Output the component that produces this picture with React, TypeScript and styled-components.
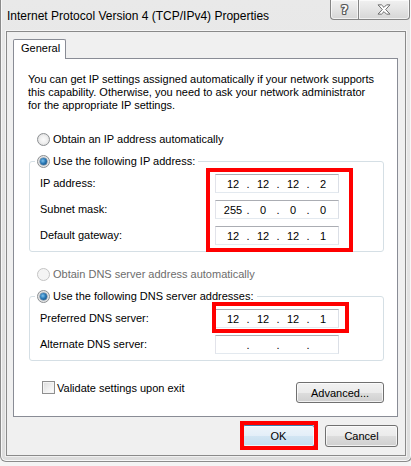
import React from "react";
import styled, { createGlobalStyle } from "styled-components";

const GlobalStyle = createGlobalStyle`
  html, body { margin: 0; padding: 0; }
  body {
    background: #f4f4f4;
    font-family: "Liberation Sans", Arial, sans-serif;
    font-size: 11px;
    color: #000;
    overflow: hidden;
  }
  #root { width: 411px; height: 466px; overflow: hidden; }
`;

const Window = styled.div`
  width: 412px;
  height: 462px;
  box-sizing: border-box;
  border: 1px solid #8b8b8b;
  border-top: none;
  border-radius: 0 0 6px 6px;
  background: linear-gradient(to bottom, #e9e9e9 0%, #e3e3e3 55%, #dddddd 100%);
  box-shadow: inset 1px 0 0 #f7f7f7, inset -1px 0 0 #f7f7f7, inset 0 -1px 0 #f7f7f7;
  display: flex;
  flex-direction: column;
`;

const TitleBar = styled.div`
  height: 31px;
  display: flex;
  align-items: center;
  padding-left: 6px;
`;

const Title = styled.div`
  flex: 1;
  font-size: 12px;
  color: #000;
  white-space: nowrap;
  padding-top: 1px;
`;

const CaptionGroup = styled.div`
  display: flex;
  align-self: flex-start;
  margin-right: 1px;
`;

const CaptionButton = styled.div<{ $width: number; $side: "left" | "right" }>`
  box-sizing: border-box;
  width: ${(p) => p.$width}px;
  height: 20px;
  border: 1px solid #858585;
  border-top: none;
  ${(p) => (p.$side === "left" ? "border-right: none;" : "")}
  border-radius: ${(p) => (p.$side === "left" ? "0 0 0 4px" : "0 0 4px 0")};
  background: linear-gradient(to bottom, #f1f1f1 0%, #e4e4e4 50%, #d6d6d6 100%);
  box-shadow: inset 0 0 0 1px rgba(255, 255, 255, 0.65);
  display: flex;
  align-items: center;
  justify-content: center;
`;

const HelpGlyph = styled.span`
  font-family: "DejaVu Sans", sans-serif;
  font-weight: bold;
  font-size: 12px;
  line-height: 12px;
  color: #fff;
  text-shadow: 1px 0 0 #555, -1px 0 0 #555, 0 1px 0 #555, 0 -1px 0 #555,
    1px 1px 0 #666, -1px -1px 0 #777, 1px -1px 0 #777, -1px 1px 0 #777;
  margin-top: 1px;
`;

const Client = styled.div`
  margin: 0 5px;
  border: 1px solid #8a8a8a;
  background: #f0f0f0;
  padding: 7px 7px 8px 6px;
  display: flex;
  flex-direction: column;
  box-shadow: 0 0 0 1px rgba(255, 255, 255, 0.55);
`;

const TabStrip = styled.div`
  display: flex;
  position: relative;
  z-index: 1;
  margin-bottom: -1px;
`;

const Tab = styled.div`
  box-sizing: border-box;
  width: 53px;
  height: 20px;
  border: 1px solid #898c95;
  border-bottom: none;
  border-radius: 2px 2px 0 0;
  background: #fff;
  padding-left: 7px;
  line-height: 17px;
`;

const Panel = styled.div`
  border: 1px solid #898c95;
  background: #fff;
  padding: 14px 13px 13px 14px;
  display: flex;
  flex-direction: column;
`;

const Intro = styled.p`
  margin: 0;
  line-height: 13px;
  white-space: nowrap;
`;

const RadioRow = styled.label<{ $top: number; $disabled?: boolean }>`
  display: flex;
  align-items: center;
  gap: 3px;
  height: 16px;
  margin: ${(p) => p.$top}px 0 0 9px;
  color: ${(p) => (p.$disabled ? "#6d6d6d" : "#000")};
  white-space: nowrap;
`;

const RadioCircle = styled.span<{ $checked?: boolean; $disabled?: boolean }>`
  box-sizing: border-box;
  flex: none;
  width: 13px;
  height: 13px;
  border-radius: 50%;
  border: 1px solid ${(p) => (p.$disabled ? "#c4c4c4" : "#8c8f92")};
  background: ${(p) =>
    p.$disabled
      ? "#f4f4f4"
      : "radial-gradient(circle at 50% 50%, #fbfbfb 0%, #f0f0f0 45%, #d4d4d4 100%)"};
  display: flex;
  align-items: center;
  justify-content: center;
  &::after {
    content: "";
    display: ${(p) => (p.$checked ? "block" : "none")};
    width: 7px;
    height: 7px;
    border-radius: 50%;
    background: radial-gradient(circle at 40% 40%, #7fc4ef 0%, #2a79b6 45%, #0d3f6e 100%);
    box-shadow: 0 0 0 0.5px #56718a;
  }
`;

const Group = styled.fieldset`
  margin: 6px 0 0 1px;
  padding: 5px 10px 6px 10px;
  border: 1px solid #d5dfe5;
  border-radius: 3px;
  min-width: 0;
`;

const GroupLegend = styled.legend`
  display: flex;
  align-items: center;
  gap: 3px;
  height: 16px;
  margin-left: -5px;
  padding: 0 3px 0 2px;
  white-space: nowrap;
`;

const GroupBody = styled.div`
  display: flex;
`;

const LabelColumn = styled.div`
  width: 175px;
  display: flex;
  flex-direction: column;
  gap: 7px;
`;

const FieldLabel = styled.div`
  height: 19px;
  line-height: 19px;
  white-space: nowrap;
`;

const FieldColumn = styled.div`
  position: relative;
  display: flex;
  flex-direction: column;
  gap: 7px;
`;

const FieldWrap = styled.div`
  position: relative;
`;

const IpBox = styled.div`
  box-sizing: border-box;
  width: 124px;
  height: 19px;
  border: 1px solid;
  border-color: #abadb3 #dbdfe6 #e3e9ef #e2e3ea;
  background: #fff;
  display: flex;
  align-items: center;
  padding-left: 5px;
`;

const Octet = styled.span`
  width: 24px;
  text-align: center;
`;

const Dot = styled.span`
  width: 6px;
  text-align: center;
`;

const Highlight = styled.span<{ $t: number; $r: number; $b: number; $l: number }>`
  position: absolute;
  top: ${(p) => p.$t}px;
  right: ${(p) => p.$r}px;
  bottom: ${(p) => p.$b}px;
  left: ${(p) => p.$l}px;
  border: 4px solid #ff0000;
  pointer-events: none;
  z-index: 2;
`;

const BottomRow = styled.div`
  display: flex;
  align-items: flex-start;
  justify-content: space-between;
  margin-top: 20px;
`;

const CheckRow = styled.label`
  display: flex;
  align-items: center;
  gap: 2px;
  height: 13px;
  margin-left: 14px;
  white-space: nowrap;
`;

const CheckBox = styled.span`
  box-sizing: border-box;
  width: 13px;
  height: 13px;
  border: 1px solid #8f8f8f;
  background: linear-gradient(135deg, #dcdcdc 0%, #f2f2f2 60%, #ffffff 100%);
  box-shadow: inset 0 0 0 1px #f4f4f4;
`;

const PushButton = styled.button<{ $width: number; $height: number; $default?: boolean }>`
  box-sizing: border-box;
  width: ${(p) => p.$width}px;
  height: ${(p) => p.$height}px;
  padding: 0;
  font-family: "Liberation Sans", Arial, sans-serif;
  font-size: 11px;
  color: #000;
  border: 1px solid ${(p) => (p.$default ? "#3c7fb1" : "#707070")};
  border-radius: 3px;
  background: ${(p) =>
    p.$default
      ? "linear-gradient(to bottom, #eef5fb 0%, #e3eef8 50%, #d2e5f3 51%, #c4dcee 100%)"
      : "linear-gradient(to bottom, #f2f2f2 0%, #ebebeb 50%, #dddddd 51%, #cfcfcf 100%)"};
  box-shadow: inset 0 0 0 1px rgba(255, 255, 255, 0.7);
`;

const AdvancedButton = styled(PushButton)`
  margin-top: 1px;
`;

const ButtonRow = styled.div`
  display: flex;
  justify-content: flex-end;
  gap: 10px;
  margin-top: 8px;
`;

const OkWrap = styled.div`
  position: relative;
  display: flex;
`;

function CloseIcon() {
  return (
    <svg width="14" height="11" viewBox="-1 -1 16 13" aria-hidden="true">
      <path
        d="M0 0 H4 L7 3 L10 0 H14 L9 5.5 L14 11 H10 L7 8 L4 11 H0 L5 5.5 Z"
        fill="#ffffff"
        stroke="#555555"
        strokeWidth="1"
        strokeLinejoin="round"
      />
    </svg>
  );
}

function IpField({ value }: { value: string[] }) {
  return (
    <IpBox>
      {value.map((v, i) => (
        <React.Fragment key={i}>
          <Octet>{v}</Octet>
          {i < 3 && <Dot>.</Dot>}
        </React.Fragment>
      ))}
    </IpBox>
  );
}

export default function App() {
  return (
    <>
      <GlobalStyle />
      <Window>
        <TitleBar>
          <Title>Internet Protocol Version 4 (TCP/IPv4) Properties</Title>
          <CaptionGroup>
            <CaptionButton $width={28} $side="left">
              <HelpGlyph>?</HelpGlyph>
            </CaptionButton>
            <CaptionButton $width={52} $side="right">
              <CloseIcon />
            </CaptionButton>
          </CaptionGroup>
        </TitleBar>
        <Client>
          <TabStrip>
            <Tab>General</Tab>
          </TabStrip>
          <Panel>
            <Intro>
              You can get IP settings assigned automatically if your network supports
              <br />
              this capability. Otherwise, you need to ask your network administrator
              <br />
              for the appropriate IP settings.
            </Intro>

            <RadioRow $top={19}>
              <RadioCircle />
              Obtain an IP address automatically
            </RadioRow>
            <Group>
              <GroupLegend>
                <RadioCircle $checked />
                Use the following IP address:
              </GroupLegend>
              <GroupBody>
                <LabelColumn>
                  <FieldLabel>IP address:</FieldLabel>
                  <FieldLabel>Subnet mask:</FieldLabel>
                  <FieldLabel>Default gateway:</FieldLabel>
                </LabelColumn>
                <FieldColumn>
                  <IpField value={["12", "12", "12", "2"]} />
                  <IpField value={["255", "0", "0", "0"]} />
                  <IpField value={["12", "12", "12", "1"]} />
                  <Highlight $t={-6} $r={-14} $b={-7} $l={-9} />
                </FieldColumn>
              </GroupBody>
            </Group>

            <RadioRow $top={14} $disabled>
              <RadioCircle $disabled />
              Obtain DNS server address automatically
            </RadioRow>
            <Group>
              <GroupLegend>
                <RadioCircle $checked />
                Use the following DNS server addresses:
              </GroupLegend>
              <GroupBody>
                <LabelColumn>
                  <FieldLabel>Preferred DNS server:</FieldLabel>
                  <FieldLabel>Alternate DNS server:</FieldLabel>
                </LabelColumn>
                <FieldColumn>
                  <FieldWrap>
                    <IpField value={["12", "12", "12", "1"]} />
                    <Highlight $t={-7} $r={-10} $b={-5} $l={-3} />
                  </FieldWrap>
                  <IpField value={["", "", "", ""]} />
                </FieldColumn>
              </GroupBody>
            </Group>

            <BottomRow>
              <CheckRow>
                <CheckBox />
                Validate settings upon exit
              </CheckRow>
              <AdvancedButton $width={88} $height={21}>
                Advanced...
              </AdvancedButton>
            </BottomRow>
          </Panel>
          <ButtonRow>
            <OkWrap>
              <PushButton $width={73} $height={22} $default>
                OK
              </PushButton>
              <Highlight $t={-4} $r={-3} $b={-3} $l={-2} />
            </OkWrap>
            <PushButton $width={73} $height={22}>
              Cancel
            </PushButton>
          </ButtonRow>
        </Client>
      </Window>
    </>
  );
}
